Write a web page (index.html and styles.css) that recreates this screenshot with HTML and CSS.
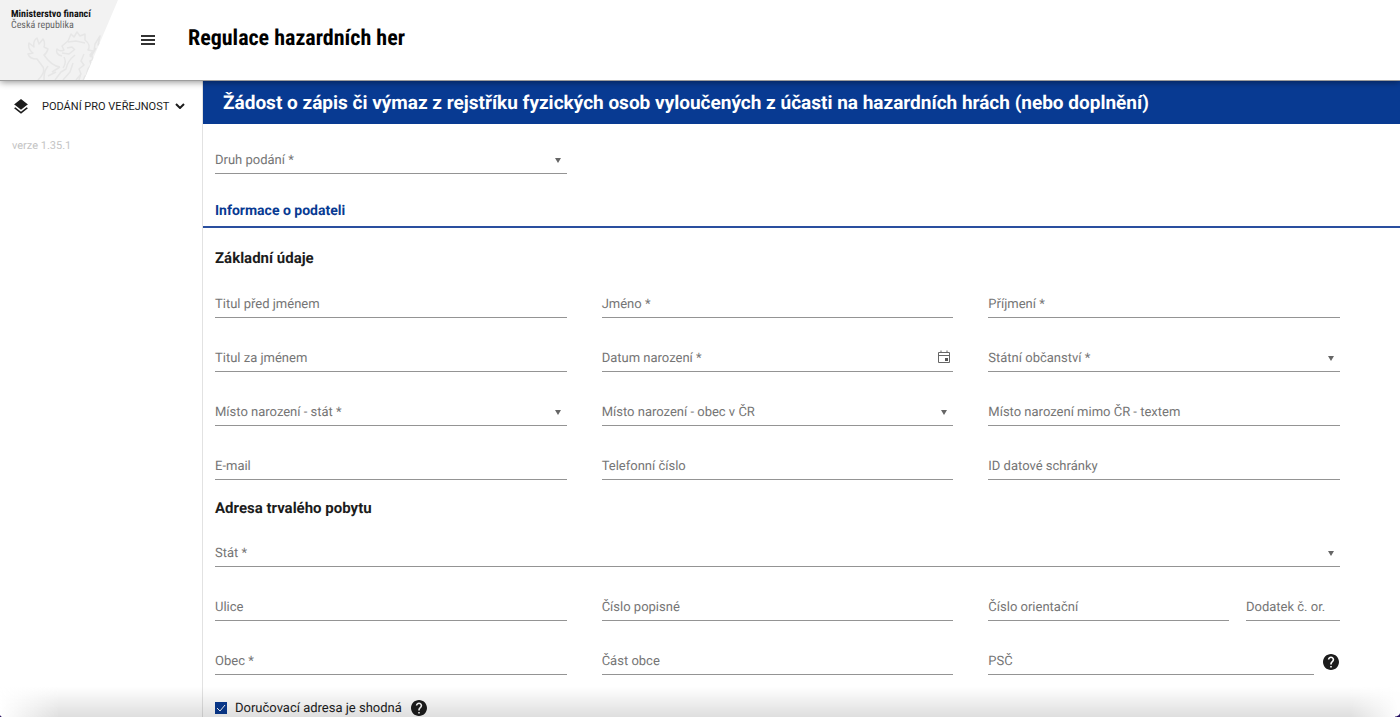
FILE: index.html
```html
<!DOCTYPE html>
<html lang="cs">
<head>
<meta charset="utf-8">
<meta name="viewport" content="width=device-width, initial-scale=1">
<title>Regulace hazardních her</title>
<link rel="stylesheet" href="styles.css">
</head>
<body>
<svg class="symbols" aria-hidden="true">
  <symbol id="help" viewBox="2 2 20 20"><path d="M12 2C6.48 2 2 6.48 2 12s4.480 10 10 10 10-4.480 10-10S17.520 2 12 2zm1 17h-2v-2h2v2zm2.070-7.750l-.9.920C13.450 12.900 13 13.500 13 15h-2v-.5c0-1.100.450-2.100 1.170-2.830l1.240-1.260c.370-.360.590-.860.590-1.410 0-1.100-.9-2-2-2s-2 .9-2 2H8c0-2.210 1.790-4 4-4s4 1.790 4 4c0 .880-.360 1.680-.930 2.250z"/></symbol>
</svg>
<header class="topbar">
  <div class="brand">
    <svg class="lion" viewBox="0 0 120 80" aria-hidden="true">
      <path d="M38 80c5-5 7-9 5-13l-6-8c-5 0-8-2-9-5l5-1c-4-3-5-6-4-10l5 4c-1-5 0-7 3-9l2 6 4-5c2 3 2 5 1 8l4 2c-1 3-2 5-4 6 4 6 9 11 16 12M44 80c0-5 0-9 4-14M63 68c3-4 3-7 1-11M62 56c-5-1-6-4-5-7 2 2 5 2 7 1l-2-4 6-5 3-7 3 3 3-5 3 4 5-2v6c4 3 5 7 3 10l5 1-3 4 4 4-4 2 2 7-4 1 1 8-4-1-2 5M68 42l8-1 9 2M67 48l5-1 3 3M62 53l7 1 5-4M75 55c-5 4-8 8-9 14l-5 3-6 8M84 54l-3 7 3 4-5 4 2 5-5 6M73 63l-3 9-7 8M79 80l2-7M90 57l4-6 1-7 5-8-2 9 3-2M96 48l-4 7 1 7-5 7-2 8M52 72l8-5M48 76l8-4"/>
    </svg>
    <div class="brand-name"><strong>Ministerstvo financí</strong><span>Česká republika</span></div>
  </div>
  <button class="menu" type="button" aria-label="Menu"><svg viewBox="0 0 14 10"><path d="M0 1h14M0 5h14M0 9h14"/></svg></button>
  <h1 class="app-title">Regulace hazardních her</h1>
</header>
<div class="layout">
  <nav class="sidebar">
    <button class="nav-item" type="button">
      <svg class="layers" viewBox="3 2 18 19.500"><path d="M11.990 18.540l-7.370-5.730L3 14.070l9 7 9-7-1.630-1.270-7.380 5.740zM12 16l7.360-5.730L21 9l-9-7-9 7 1.630 1.270L12 16z"/></svg>
      <span>PODÁNÍ PRO VEŘEJNOST</span>
      <svg class="chevron" viewBox="0 0 10 6"><path d="M1 1l4 4 4-4"/></svg>
    </button>
    <p class="version">verze 1.35.1</p>
  </nav>
  <main class="content">
    <h2 class="banner">Žádost o zápis či výmaz z rejstříku fyzických osob vyloučených z účasti na hazardních hrách (nebo doplnění)</h2>
    <form>
      <div class="grid intro">
        <div class="field select"><label for="druh">Druh podání *</label><select id="druh"></select></div>
      </div>
      <h3 class="tab-title">Informace o podateli</h3>
      <section class="group">
        <h4>Základní údaje</h4>
        <div class="grid">
          <div class="field"><label for="titul1">Titul před jménem</label><input id="titul1"></div>
          <div class="field"><label for="jmeno">Jméno *</label><input id="jmeno"></div>
          <div class="field"><label for="prijmeni">Příjmení *</label><input id="prijmeni"></div>
          <div class="field"><label for="titul2">Titul za jménem</label><input id="titul2"></div>
          <div class="field"><label for="datum">Datum narození *</label><input id="datum">
            <button class="calendar" type="button" aria-label="Vybrat datum"><svg viewBox="0 0 12 13"><path d="M.5 2.500h11v10H.5zM.5 5.500h11M3 .5v2M9 .5v2"/><path class="day" d="M7 8h3v3H7z"/></svg></button></div>
          <div class="field select"><label for="obcanstvi">Státní občanství *</label><select id="obcanstvi"></select></div>
          <div class="field select"><label for="mstat">Místo narození - stát *</label><select id="mstat"></select></div>
          <div class="field select"><label for="mobec">Místo narození - obec v ČR</label><select id="mobec"></select></div>
          <div class="field"><label for="mimo">Místo narození mimo ČR - textem</label><input id="mimo"></div>
          <div class="field"><label for="email">E-mail</label><input id="email" type="email"></div>
          <div class="field"><label for="tel">Telefonní číslo</label><input id="tel" type="tel"></div>
          <div class="field"><label for="ds">ID datové schránky</label><input id="ds"></div>
        </div>
      </section>
      <section class="group">
        <h4>Adresa trvalého pobytu</h4>
        <div class="grid">
          <div class="field select wide"><label for="stat">Stát *</label><select id="stat"></select></div>
          <div class="field"><label for="ulice">Ulice</label><input id="ulice"></div>
          <div class="field"><label for="cp">Číslo popisné</label><input id="cp"></div>
          <div class="pair number">
            <div class="field"><label for="co">Číslo orientační</label><input id="co"></div>
            <div class="field"><label for="dodatek">Dodatek č. or.</label><input id="dodatek"></div>
          </div>
          <div class="field"><label for="obec">Obec *</label><input id="obec"></div>
          <div class="field"><label for="cast">Část obce</label><input id="cast"></div>
          <div class="pair zip">
            <div class="field"><label for="psc">PSČ</label><input id="psc"></div>
            <button class="help" type="button" aria-label="Nápověda"><svg><use href="#help"/></svg></button>
          </div>
        </div>
        <div class="check">
          <span class="box"><input id="shodna" type="checkbox" checked><svg viewBox="0 0 12 12" aria-hidden="true"><path d="M2 6l3 3 5-6"/></svg></span><label for="shodna">Doručovací adresa je shodná</label>
          <button class="help" type="button" aria-label="Nápověda"><svg><use href="#help"/></svg></button>
        </div>
      </section>
    </form>
  </main>
</div>
<div class="bottom-shade"></div>
</body>
</html>
```
FILE: styles.css
```css
* { box-sizing: border-box; }
body { margin: 0; min-height: 100vh; display: flex; flex-direction: column; background: #fff; color: #1c1c1c; font: 13px/20px Roboto, sans-serif; text-rendering: geometricPrecision; }
h1, h2, h3, h4, p { margin: 0; }
button { padding: 0; border: 0; background: none; color: inherit; font: inherit; cursor: pointer; }
svg { display: block; }
.symbols { position: absolute; width: 0; height: 0; }

.topbar { position: relative; z-index: 1; display: flex; align-items: center; height: 81px; background: #fff; border-bottom: 1px solid #9c9c9c; box-shadow: 0 1px 7px rgba(0, 0, 0, .45); }
.brand { display: grid; width: 118px; height: 80px; background: #f2f2f2; clip-path: polygon(0 0, 100% 0, 84px 100%, 0 100%); }
.brand > * { grid-area: 1 / 1; }
.brand-name { display: flex; flex-direction: column; padding: 9px 0 0 11px; font: 10px/11px "Liberation Sans Narrow", "Roboto Condensed", Roboto, sans-serif; color: #666; white-space: nowrap; }
.brand-name strong { color: #111; }
.lion { width: 120px; height: 80px; fill: none; stroke: #e6e6e6; stroke-width: 1.5; stroke-linejoin: round; }
.menu { margin-left: 23px; }
.menu svg { width: 14px; height: 10px; fill: none; stroke: #333; stroke-width: 2; }
.app-title { margin: 0 0 3px 33px; color: #000; font: bold 22px/28px "Liberation Sans Narrow", "Roboto Condensed", Roboto, sans-serif; }

.layout { display: flex; flex: 1; }
.sidebar { flex: 0 0 203px; border-right: 1px solid #e2e2e2; padding: 14px 12px; }
.nav-item { display: flex; align-items: center; padding-left: 2px; font-size: 11px; line-height: 20px; white-space: nowrap; }
.nav-item span { padding-top: 2px; }
.layers { width: 14px; height: 15px; margin-right: 14px; fill: #1c1c1c; }
.chevron { width: 10px; height: 6px; margin-left: 6px; fill: none; stroke: #1c1c1c; stroke-width: 2; }
.version { margin-top: 19px; color: #c4c4c4; font-size: 11px; }

.content { flex: 1; min-width: 0; }
.banner { padding: 10px 20px 9px; background: #083a92; color: #fff; font-size: 19px; line-height: 24px; }
.grid { display: grid; grid-template-columns: repeat(3, minmax(0, 1fr)); gap: 24px 35px; }
.intro { padding: 20px 60px 0 12px; }
.tab-title { padding: 27px 12px 5px; border-bottom: 2px solid #2a4f9f; color: #083a92; font-size: 14px; }
.group { padding: 0 60px 0 12px; }
.group h4 { padding: 20px 0; font-size: 15px; }
.group + .group h4 { padding: 18px 0 19px; }

.field { display: grid; height: 30px; align-items: center; border-bottom: 1px solid #949494; }
.field > * { grid-area: 1 / 1; }
.field label { padding-top: 4px; color: #757575; white-space: nowrap; pointer-events: none; }
.field input, .field select { width: 100%; height: 29px; padding: 0; border: 0; outline: 0; background: none; appearance: none; font: inherit; }
.select::after { content: ""; grid-area: 1 / 1; justify-self: end; margin: 3px 6px 0 0; border: solid transparent; border-width: 5px 3px 0; border-top-color: #666; pointer-events: none; }
.wide { grid-column: 1 / -1; }
.pair { display: grid; align-items: center; }
.number { grid-template-columns: minmax(0, 1fr) 94px; gap: 17px; }
.zip { grid-template-columns: minmax(0, 1fr) 16px; column-gap: 9px; margin-right: 1px; }
.zip .help { padding-top: 4px; }
.calendar { justify-self: end; margin-right: 3px; }
.calendar svg { width: 12px; height: 13px; fill: none; stroke: #666; }
.calendar .day { fill: #555; stroke: none; }
.help svg { width: 16px; height: 16px; fill: #1c1c1c; }
.check { display: flex; align-items: center; margin-top: 23px; height: 19px; }
.box { display: grid; margin-right: 8px; }
.box > * { grid-area: 1 / 1; width: 12px; height: 12px; }
.box input { margin: 0; appearance: none; border: 1px solid #083a92; }
.box input:checked { background: #083a92; }
.box svg { fill: none; stroke: #fff; pointer-events: none; }
.check label { padding-top: 2px; margin-right: 9px; }

.bottom-shade { position: fixed; inset: auto 0 0; height: 30px; pointer-events: none; background: radial-gradient(circle at 0 0, transparent 5px, #25105f 6px) right bottom / 5px 6px no-repeat, radial-gradient(circle at 100% 0, transparent 4px, #25105f 5px) left bottom / 4px 4px no-repeat, linear-gradient(90deg, #fff 0, transparent 60px calc(100% - 50px), #fff), linear-gradient(transparent, rgba(0, 0, 0, .13)); mix-blend-mode: multiply; }
@media (max-width: 800px) { .grid { grid-template-columns: minmax(0, 1fr); } }
```
